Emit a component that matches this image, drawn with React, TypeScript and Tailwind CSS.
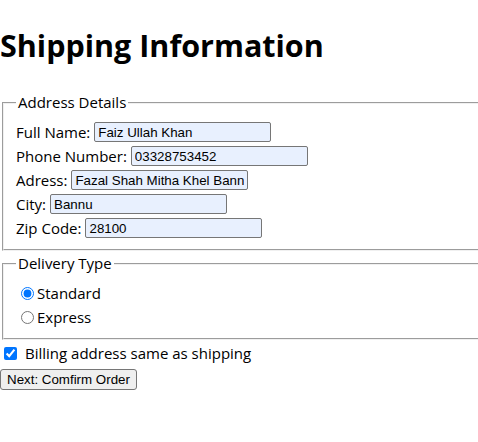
import React from "react";

type Field = { label: string; value: string };

const addressFields: Field[] = [
  { label: "Full Name:", value: "Faiz Ullah Khan" },
  { label: "Phone Number:", value: "03328753452" },
  { label: "Adress:", value: "Fazal Shah Mitha Khel Bannu" },
  { label: "City:", value: "Bannu" },
  { label: "Zip Code:", value: "28100" },
];

function TextRow({ label, value }: Field) {
  return (
    <div className="flex h-[24px] items-center gap-[4px]">
      <label className="leading-[21px]">{label}</label>
      <input
        type="text"
        defaultValue={value}
        className="h-[20px] w-[177px] rounded-[2px] border border-[#767676] bg-[#e8f0fe] px-[3px] font-['Liberation_Sans',Arial,sans-serif] text-[13.33px] text-black outline-none"
      />
    </div>
  );
}

export default function App() {
  return (
    <div className="w-full overflow-hidden bg-white text-black">
      <div className="w-[520px] font-['Open_Sans',sans-serif] text-[15px]">
        <h1 className="mt-[25px] text-[30.5px] font-bold leading-[40px]">
          Shipping Information
        </h1>

        <form className="mt-[27px]" onSubmit={(e) => e.preventDefault()}>
          <fieldset className="mx-[2px] border-2 border-[#f0f0f0] px-[12px] pt-[7px] pb-[9px] [border-style:groove]">
            <legend className="px-[2px] leading-[21px]">Address Details</legend>
            {addressFields.map((f) => (
              <TextRow key={f.label} label={f.label} value={f.value} />
            ))}
          </fieldset>

          <fieldset className="mx-[2px] mt-[2px] border-2 border-[#f0f0f0] px-[12px] pt-[7px] pb-[9px] [border-style:groove]">
            <legend className="px-[2px] leading-[21px]">Delivery Type</legend>
            <label className="flex h-[24px] items-center leading-[21px]">
              <input type="radio" name="delivery" defaultChecked className="ml-[5px] mr-[3px] h-[13px] w-[13px]" />
              Standard
            </label>
            <label className="flex h-[24px] items-center leading-[21px]">
              <input type="radio" name="delivery" className="ml-[5px] mr-[3px] h-[13px] w-[13px]" />
              Express
            </label>
          </fieldset>

          <label className="flex h-[27px] items-center leading-[21px]">
            <input type="checkbox" defaultChecked className="ml-[4px] mr-[8px] h-[13px] w-[13px]" />
            Billing address same as shipping
          </label>

          <button
            type="submit"
            className="h-[21px] rounded-[3px] border border-[#767676] bg-[#efefef] px-[6px] font-['Liberation_Sans',Arial,sans-serif] text-[13.33px] leading-[17px] text-black"
          >
            Next: Comfirm Order
          </button>
        </form>
      </div>
    </div>
  );
}
